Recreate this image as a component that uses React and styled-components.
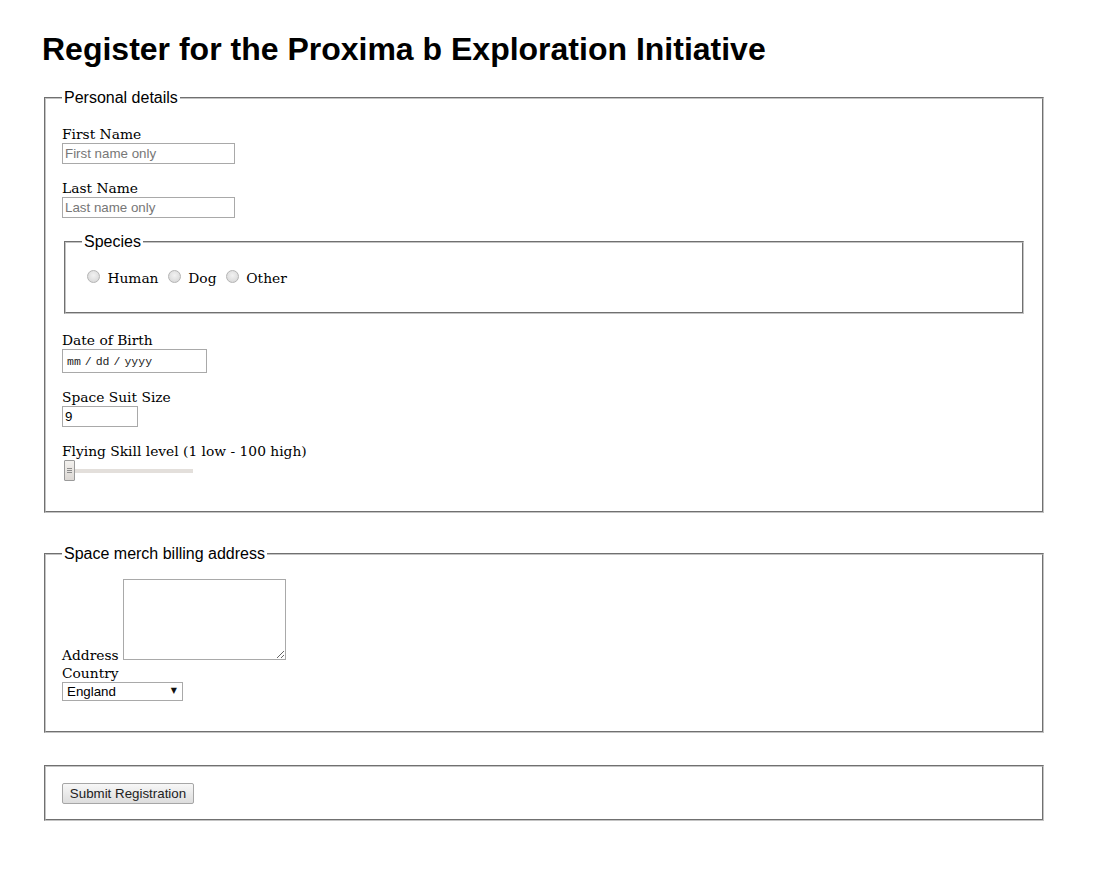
import React from "react";
import styled, { createGlobalStyle } from "styled-components";

const GlobalStyle = createGlobalStyle`
  body {
    margin: 8px;
    background: #fff;
    color: #000;
    font-family: "DejaVu Serif", "Liberation Serif", serif;
    font-size: 13.8px;
  }
`;

const Page = styled.div`
  padding: 0 0 40px 34px;
`;

const Title = styled.h1`
  font-family: "Liberation Sans", Arial, sans-serif;
  font-size: 32px;
  font-weight: bold;
  line-height: 37px;
  margin: 23px 0 21px;
`;

const Fieldset = styled.fieldset`
  box-sizing: border-box;
  width: ${(p) => (p.$nested ? "auto" : "1000px")};
  margin: ${(p) => (p.$nested ? "15px 2px 17px" : "0 2px 32px")};
  padding: ${(p) => p.$pad || "3px 16px 15px"};
  border: 2px groove #c4c4c4;
  min-width: 0;
`;

const Legend = styled.legend`
  font-family: "Liberation Sans", Arial, sans-serif;
  font-size: 16px;
  line-height: 18px;
  padding: 0 2px;
`;

const Field = styled.div`
  margin: ${(p) => p.$margin || "15px 0"};
`;

const Label = styled.label`
  display: ${(p) => (p.$inline ? "inline" : "block")};
  font-size: 13.8px;
  line-height: 18px;
`;

const controlBase = `
  box-sizing: border-box;
  display: block;
  margin: 0;
  border: 1px solid #a9a9a9;
  font-family: "Liberation Sans", Arial, sans-serif;
  font-size: 13.33px;
  color: #000;
  background: #fff;
  outline: none;
`;

const TextInput = styled.input`
  ${controlBase}
  width: ${(p) => p.$w || "173px"};
  height: 21px;
  padding: 1px 2px;

  &::placeholder {
    color: #777;
  }
  &::-webkit-inner-spin-button,
  &::-webkit-outer-spin-button {
    -webkit-appearance: none;
    margin: 0;
  }
`;

const DateInput = styled.input`
  ${controlBase}
  width: 145px;
  height: 24px;
  padding: 1px 3px;
  font-family: "Liberation Mono", "DejaVu Sans Mono", monospace;
  font-size: 11.5px;
  color: #222;

  &::-webkit-calendar-picker-indicator {
    display: none;
  }
  &::-webkit-datetime-edit-text {
    padding: 0 3px;
  }
`;

const RadioRow = styled.div`
  margin: 13px 0 12px;
  line-height: 18px;
`;

const Radio = styled.input`
  appearance: none;
  -webkit-appearance: none;
  box-sizing: border-box;
  width: 13px;
  height: 13px;
  margin: 3px 3px 0 5px;
  border: 1px solid #b4b4b4;
  border-radius: 50%;
  background: radial-gradient(circle at 50% 40%, #f2f2f2 0%, #d6d6d6 90%);
  vertical-align: baseline;
`;

const Range = styled.input`
  -webkit-appearance: none;
  appearance: none;
  display: block;
  width: 129px;
  height: 21px;
  margin: 0 2px;
  background: transparent;

  &::-webkit-slider-runnable-track {
    height: 4px;
    background: #e3dfdb;
  }
  &::-webkit-slider-thumb {
    -webkit-appearance: none;
    box-sizing: border-box;
    width: 11px;
    height: 21px;
    margin-top: -9px;
    border: 1px solid #9a9a9a;
    border-radius: 1px;
    background: linear-gradient(#8d8d8d, #8d8d8d) 50% 7px / 5px 1px no-repeat,
      linear-gradient(#8d8d8d, #8d8d8d) 50% 9px / 5px 1px no-repeat,
      linear-gradient(#8d8d8d, #8d8d8d) 50% 11px / 5px 1px no-repeat,
      linear-gradient(#f3f1ee, #dcd8d4);
  }
`;

const TextArea = styled.textarea`
  box-sizing: border-box;
  width: 163px;
  height: 81px;
  margin: 0;
  border: 1px solid #a9a9a9;
  vertical-align: baseline;
  font-family: "Liberation Mono", monospace;
  font-size: 13px;
  outline: none;
`;

const SelectWrap = styled.span`
  position: relative;
  display: inline-block;
`;

const Select = styled.select`
  ${controlBase}
  appearance: none;
  -webkit-appearance: none;
  width: 121px;
  height: 19px;
  padding: 0 4px;
  border-radius: 0;
`;

const Arrow = styled.span`
  position: absolute;
  right: 6px;
  top: 4px;
  font-family: "DejaVu Sans", sans-serif;
  font-size: 8px;
  line-height: 10px;
  color: #111;
  pointer-events: none;
`;

const SubmitButton = styled.button`
  box-sizing: border-box;
  display: block;
  width: 132px;
  height: 21px;
  margin: 0;
  padding: 0 6px;
  border: 1px solid #a6a6a6;
  border-radius: 2px;
  background: linear-gradient(#f7f7f7, #dddddd);
  font-family: "Liberation Sans", Arial, sans-serif;
  font-size: 13.33px;
  color: #222;
`;

export default function App() {
  return (
    <>
      <GlobalStyle />
      <Page>
        <Title>Register for the Proxima b Exploration Initiative</Title>
        <form onSubmit={(e) => e.preventDefault()}>
          <Fieldset>
            <Legend>Personal details</Legend>
            <Field>
              <Label htmlFor="first">First Name</Label>
              <TextInput id="first" type="text" placeholder="First name only" />
            </Field>
            <Field>
              <Label htmlFor="last">Last Name</Label>
              <TextInput id="last" type="text" placeholder="Last name only" />
            </Field>
            <Fieldset $nested $pad="3px 16px 13px">
              <Legend>Species</Legend>
              <RadioRow>
                <Radio type="radio" name="species" id="human" />{" "}
                <Label $inline htmlFor="human">Human</Label>{" "}
                <Radio type="radio" name="species" id="dog" />{" "}
                <Label $inline htmlFor="dog">Dog</Label>{" "}
                <Radio type="radio" name="species" id="other" />{" "}
                <Label $inline htmlFor="other">Other</Label>
              </RadioRow>
            </Fieldset>
            <Field>
              <Label htmlFor="dob">Date of Birth</Label>
              <DateInput id="dob" type="date" />
            </Field>
            <Field>
              <Label htmlFor="suit">Space Suit Size</Label>
              <TextInput id="suit" type="number" defaultValue="9" $w="76px" />
            </Field>
            <Field>
              <Label htmlFor="skill">Flying Skill level (1 low - 100 high)</Label>
              <Range id="skill" type="range" min="1" max="100" defaultValue="1" />
            </Field>
          </Fieldset>

          <Fieldset>
            <Legend>Space merch billing address</Legend>
            <Field $margin="13px 0 15px">
              <Label $inline htmlFor="address">Address</Label>{" "}
              <TextArea id="address" />
              <Label htmlFor="country">Country</Label>
              <SelectWrap>
                <Select id="country" defaultValue="England">
                  <option>England</option>
                  <option>Scotland</option>
                  <option>Wales</option>
                  <option>Northern Ireland</option>
                </Select>
                <Arrow>▼</Arrow>
              </SelectWrap>
            </Field>
          </Fieldset>

          <Fieldset $pad="16px 16px 15px">
            <SubmitButton type="submit">Submit Registration</SubmitButton>
          </Fieldset>
        </form>
      </Page>
    </>
  );
}
